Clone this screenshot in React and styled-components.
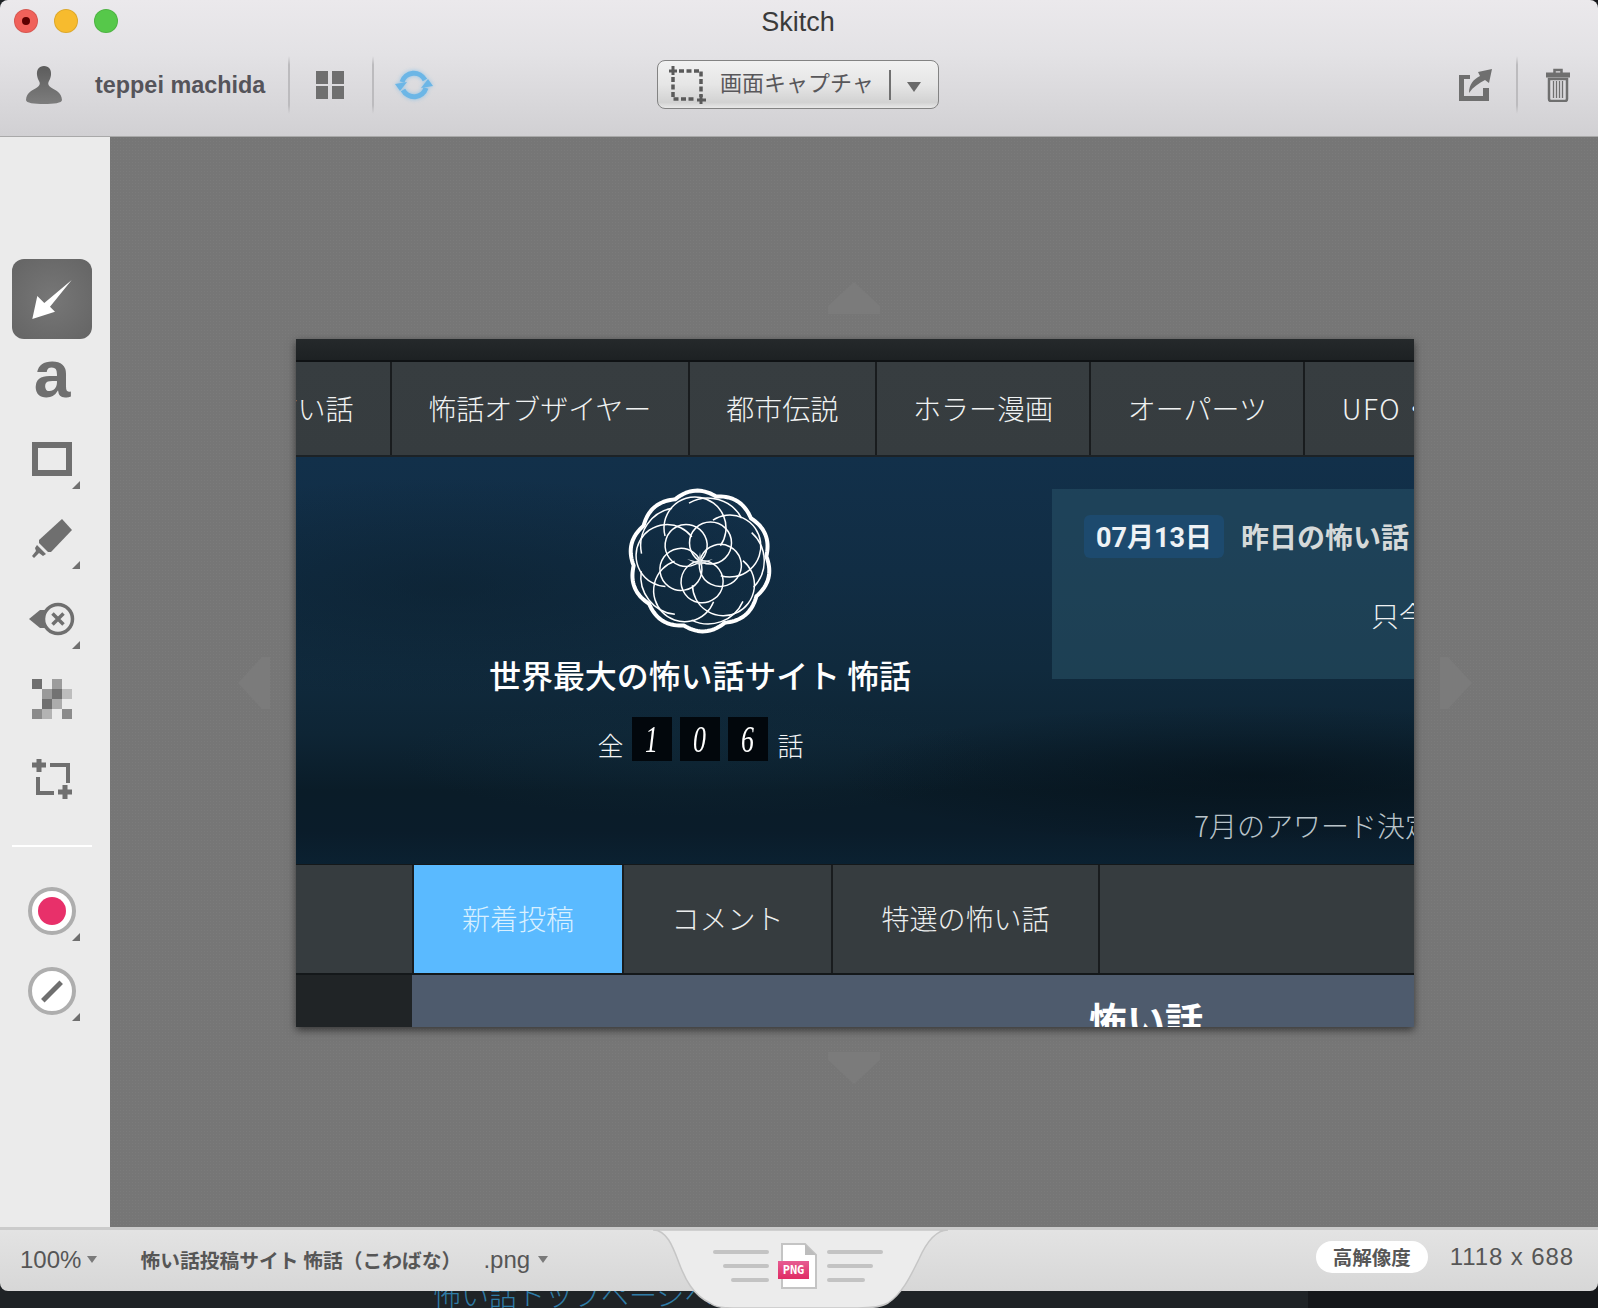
import React from "react";
import styled, { createGlobalStyle } from "styled-components";

const sans = `"Liberation Sans", "Noto Sans CJK JP", sans-serif`;
const jp = `"Noto Sans CJK JP", "Liberation Sans", sans-serif`;
const grey = "#6f6f6f";

const GlobalStyle = createGlobalStyle`
  html, body {
    margin: 0;
    padding: 0;
    background: #1f2326;
  }
  * {
    box-sizing: border-box;
  }
`;

const Page = styled.div`
  width: 1598px;
  height: 1308px;
  display: flex;
  flex-direction: column;
  overflow: hidden;
  background: linear-gradient(90deg, #1f2326 0, #1f2326 1308px, #15171a 1308px);
  font-family: ${sans};
`;

const Window = styled.div`
  position: relative;
  z-index: 1;
  height: 1291px;
  flex-shrink: 0;
  display: flex;
  flex-direction: column;
`;

const Backdrop = styled.div`
  height: 17px;
  padding-left: 433px;
  overflow: hidden;
`;

const BackdropText = styled.div`
  margin-top: -14px;
  font: 300 28px/34px ${jp};
  color: #2f7ca6;
`;

/* top of the window */
const Toolbar = styled.header`
  height: 137px;
  flex-shrink: 0;
  display: grid;
  grid-template-columns: 657px 282px 1fr;
  grid-template-rows: 43px 1fr;
  border-radius: 8px 8px 0 0;
  border-bottom: 1px solid #a9a9a9;
  background: linear-gradient(#ebe9ec, #e3e2e5 40%, #d1d0d3);
`;

const Lights = styled.div`
  grid-column: 1;
  display: flex;
  gap: 16px;
  padding: 9px 0 0 14px;
`;

const Light = styled.span`
  width: 24px;
  height: 24px;
  border-radius: 50%;
  display: flex;
  align-items: center;
  justify-content: center;
  background: ${(p) => p.color};
  border: 1px solid rgba(0, 0, 0, 0.1);
`;

const LightDot = styled.span`
  width: 8px;
  height: 8px;
  border-radius: 50%;
  background: #5c0000;
`;

const Title = styled.div`
  grid-column: 2;
  padding-top: 6px;
  text-align: center;
  font-size: 27px;
  line-height: 33px;
  color: #3a3a3a;
`;

const ToolsLeft = styled.div`
  grid-column: 1;
  grid-row: 2;
  display: flex;
  align-items: center;
  height: 84px;
`;

const ToolsRight = styled.div`
  grid-column: 3;
  grid-row: 2;
  display: flex;
  align-items: center;
  justify-content: flex-end;
  height: 84px;
  padding-right: 27px;
`;

const Avatar = styled.svg`
  width: 38px;
  height: 40px;
  margin: 0 32px 0 25px;
  flex-shrink: 0;
`;

const UserName = styled.span`
  width: 193px;
  font-size: 23.4px;
  font-weight: 700;
  color: #55545a;
`;

const Divider = styled.span`
  width: 2px;
  height: 58px;
  background: linear-gradient(transparent, #bcbbbe 15%, #bcbbbe 85%, transparent);
`;

const GridIcon = styled.div`
  display: grid;
  grid-template-columns: 12px 12px;
  grid-auto-rows: 13px;
  gap: 2px 4px;
  margin: 0 28px 0 26px;
  & > span {
    background: ${grey};
  }
`;

const SyncIcon = styled.svg`
  width: 40px;
  height: 36px;
  margin-left: 20px;
  filter: drop-shadow(0 0 2px rgba(110, 185, 235, 0.7));
`;

const CaptureWrap = styled.div`
  grid-column: 2;
  grid-row: 2;
  padding-top: 17px;
`;

const CaptureButton = styled.div`
  width: 282px;
  height: 49px;
  display: flex;
  align-items: center;
  padding-left: 11px;
  border: 1px solid #838383;
  border-radius: 8px;
  background: linear-gradient(#f1f1f1, #e6e6e6 50%, #d2d2d2 88%, #e8e8e8);
`;

const CaptureLabel = styled.span`
  margin: 0 0 7px 14px;
  font: 400 22px/1 ${jp};
  color: #58575a;
  white-space: nowrap;
`;

const CaptureSep = styled.span`
  width: 2px;
  height: 30px;
  margin-left: 15px;
  background: #707070;
`;

const Caret = styled.span`
  width: 0;
  height: 0;
  margin-left: ${(p) => p.gap || 0}px;
  margin-top: ${(p) => p.drop || 0}px;
  border-left: ${(p) => p.size}px solid transparent;
  border-right: ${(p) => p.size}px solid transparent;
  border-top: ${(p) => p.size * 1.5}px solid ${(p) => p.color || "#6a6a6a"};
`;

const TrashIcon = styled.svg`
  width: 26px;
  height: 34px;
  margin-left: 27px;
`;

const ShareIcon = styled.svg`
  width: 36px;
  height: 34px;
  margin-right: 22px;
`;

/* middle of the window */
const Body = styled.div`
  flex: 1;
  display: flex;
  min-height: 0;
`;

const Sidebar = styled.aside`
  width: 110px;
  flex-shrink: 0;
  display: flex;
  flex-direction: column;
  align-items: flex-start;
  padding: 122px 0 0 12px;
  background: #ebebeb;
`;

const Tool = styled.div`
  position: relative;
  width: 80px;
  height: 80px;
  flex-shrink: 0;
  display: flex;
  align-items: center;
  justify-content: center;
  border-radius: 12px;
  background: ${(p) =>
    p.active ? "radial-gradient(circle, #777 0, #646464 100%)" : "transparent"};
`;

const ToolLetter = styled.span`
  font: 700 66px/1 ${sans};
  color: ${grey};
  margin-top: -10px;
`;

const Corner = styled.span`
  position: absolute;
  right: 12px;
  bottom: 10px;
  width: 0;
  height: 0;
  border-left: 8px solid transparent;
  border-bottom: 8px solid ${grey};
`;

const RectIcon = styled.span`
  width: 40px;
  height: 34px;
  border: 6px solid ${grey};
`;

const PixelGrid = styled.div`
  display: grid;
  grid-template-columns: repeat(4, 10px);
  grid-auto-rows: 10px;
`;

const Pixel = styled.span`
  background: ${(p) => p.shade};
`;

const SideRule = styled.div`
  width: 80px;
  height: 2px;
  margin: 26px 0 24px;
  background: #fff;
`;

const Swatch = styled.span`
  width: 48px;
  height: 48px;
  display: flex;
  align-items: center;
  justify-content: center;
  border-radius: 50%;
  border: 4px solid #aeaeae;
  background: #fff;
`;

const SwatchDot = styled.span`
  width: 28px;
  height: 28px;
  border-radius: 50%;
  background: #e8306a;
`;

const SwatchLine = styled.span`
  width: 26px;
  height: 5px;
  background: ${grey};
  transform: rotate(-45deg);
`;

const Canvas = styled.main`
  flex: 1;
  display: flex;
  align-items: center;
  justify-content: center;
  padding: 2px 0 0 2px;
  background-color: #767676;
  background-image: radial-gradient(rgba(255, 255, 255, 0.035) 1px, transparent 1px);
  background-size: 3px 3px;
`;

const Shot = styled.div`
  position: relative;
  width: 1118px;
  height: 688px;
  display: flex;
  flex-direction: column;
  background: #202426;
  box-shadow: 0 3px 8px rgba(0, 0, 0, 0.55);
`;

const Nudge = styled.svg`
  position: absolute;
  width: 56px;
  height: 36px;
  left: ${(p) => p.$left}px;
  top: ${(p) => p.$top}px;
  transform: rotate(${(p) => p.$turn}deg);
  transform-origin: center;
`;

const ShotClip = styled.div`
  flex: 1;
  display: flex;
  flex-direction: column;
  overflow: hidden;
`;

const TopStrip = styled.div`
  height: 23px;
  flex-shrink: 0;
  background: linear-gradient(#25292b, #1d2123);
  border-bottom: 2px solid #0f1214;
`;

const NavRow = styled.nav`
  height: 95px;
  flex-shrink: 0;
  display: flex;
  margin-left: -63px;
  background: linear-gradient(#373d40, #363c3f);
  border-bottom: 2px solid #1c2226;
`;

const NavItem = styled.div`
  flex-shrink: 0;
  display: flex;
  align-items: center;
  padding: 0 36.4px 2px;
  border-right: 2px solid #191c1e;
  font: 300 28px/1 ${jp};
  color: #f0f2f2;
  white-space: nowrap;
`;

const NavLatin = styled.span`
  letter-spacing: 1.6px;
`;

const Hero = styled.section`
  height: 407px;
  flex-shrink: 0;
  display: flex;
  overflow: hidden;
  background:
    radial-gradient(ellipse 420px 70px at 960px 318px, rgba(3, 12, 18, 0.5), transparent),
    radial-gradient(ellipse 380px 110px at 150px 130px, rgba(10, 28, 40, 0.45), transparent),
    radial-gradient(ellipse 300px 60px at 400px 300px, rgba(20, 50, 68, 0.25), transparent),
    linear-gradient(#12304a 0, #112d44 28%, #102a3d 52%, #0e2535 68%, #0a1c28 82%, #0a1c2a 92%, #0b2131 100%);
`;

const Brand = styled.div`
  width: 756px;
  flex-shrink: 0;
  display: flex;
  flex-direction: column;
  align-items: center;
  padding: 31px 0 0 52px;
`;

const Logo = styled.svg`
  width: 146px;
  height: 146px;
  display: block;
`;

const BrandTitle = styled.h1`
  margin: 17px 0 0;
  font: 500 32px/46px ${jp};
  letter-spacing: -0.1px;
  color: #fff;
  white-space: nowrap;
`;

const Counter = styled.div`
  display: flex;
  align-items: flex-end;
  gap: 8px;
  margin: 20px 0 0 1px;
  font: 300 26px/38px ${jp};
  color: #f2f4f5;
`;

const Digit = styled.span`
  width: 40px;
  height: 44px;
  display: flex;
  align-items: center;
  justify-content: center;
  background: #02070c;
`;

const DigitFace = styled.span`
  display: block;
  font: italic 400 38px/1 "Liberation Serif", serif;
  color: #fff;
  transform: scaleX(0.68);
`;

const CounterUnit = styled.span`
  margin: 0 0 -3px ${(p) => p.left || 0}px;
`;

const News = styled.div`
  width: 640px;
  flex-shrink: 0;
  padding-top: 32px;
`;

const NewsCard = styled.div`
  height: 190px;
  padding: 26px 0 0 32px;
  background: rgba(46, 92, 110, 0.45);
`;

const NewsHead = styled.div`
  display: flex;
  align-items: center;
  gap: 17px;
`;

const DateBadge = styled.span`
  width: 140px;
  height: 43px;
  display: flex;
  align-items: center;
  justify-content: center;
  padding-top: 4px;
  border-radius: 6px;
  background: #1d4a6e;
  font: 700 27px/1 "Roboto", ${jp};
  color: #eef2f5;
`;

const NewsHeading = styled.span`
  margin-bottom: 2px;
  font: 700 28px/1 ${jp};
  color: #d5d9d9;
  white-space: nowrap;
`;

const NewsBody = styled.div`
  margin-top: 43px;
  padding-left: 287px;
  font: 300 28px/1 ${jp};
  color: #eef1f2;
  white-space: nowrap;
`;

const Award = styled.div`
  margin-top: 132px;
  padding-left: 142px;
  font: 300 28px/1 ${jp};
  color: #b9c4ca;
  white-space: nowrap;
`;

const TabRow = styled.nav`
  height: 111px;
  flex-shrink: 0;
  display: flex;
  padding-left: 116px;
  background: #363c3f;
  border-top: 1px solid #14181a;
  border-bottom: 2px solid #14181a;
`;

const TabItem = styled.div`
  width: ${(p) => p.width}px;
  flex-shrink: 0;
  display: flex;
  align-items: center;
  justify-content: center;
  padding-bottom: 2px;
  border-left: 2px solid #191c1e;
  background: ${(p) => (p.active ? "#5abaff" : "transparent")};
  font: 300 28px/1 ${jp};
  color: ${(p) => (p.active ? "#d8f0ff" : "#eceeee")};
  white-space: nowrap;
`;

const TabEnd = styled.span`
  border-left: 2px solid #191c1e;
`;

const LowerRow = styled.div`
  flex: 1;
  display: flex;
  min-height: 0;
`;

const LowerGutter = styled.div`
  width: 116px;
  flex-shrink: 0;
  background: #202426;
`;

const LowerPanel = styled.div`
  flex: 1;
  padding: 21px 0 0 677px;
  background: #4e5b6d;
  font: 700 38px/1.2 ${jp};
  color: #fff;
  white-space: nowrap;
`;

/* bottom of the window */
const StatusBar = styled.footer`
  position: relative;
  height: 64px;
  flex-shrink: 0;
  display: flex;
  align-items: center;
  padding-bottom: 2px;
  border-top: 3px solid #cbcbcb;
  border-radius: 0 0 8px 8px;
  background: linear-gradient(#e3e3e3, #d7d7d7);
  color: #565656;
`;

const Zoom = styled.span`
  margin-left: 20px;
  font-size: 24px;
`;

const FileName = styled.span`
  margin-left: 43px;
  font: 700 19.8px/1 ${jp};
  white-space: nowrap;
`;

const Extension = styled.span`
  margin-left: 22px;
  font-size: 24px;
`;

const StatusRight = styled.div`
  margin: -5px 0 0 auto;
  display: flex;
  align-items: center;
  padding-right: 24px;
`;

const Pill = styled.span`
  width: 112px;
  height: 32px;
  display: flex;
  align-items: center;
  justify-content: center;
  border-radius: 16px;
  background: #fff;
  font: 700 19.5px/1 ${jp};
`;

const Dimensions = styled.span`
  margin-left: 22px;
  font-size: 24px;
  letter-spacing: 0.9px;
`;

const Notch = styled.div`
  position: absolute;
  left: 653px;
  top: -3px;
  width: 280px;
  height: 84px;
  display: flex;
  justify-content: center;
  gap: 9px;
  padding: 16px 0 0 10px;
`;

const NotchShape = styled.svg`
  position: absolute;
  left: 0;
  top: 0;
  width: 296px;
  height: 84px;
`;

const Lines = styled.div`
  position: relative;
  display: flex;
  flex-direction: column;
  gap: 10px;
  padding-top: 7px;
  align-items: ${(p) => (p.right ? "flex-start" : "flex-end")};
  width: 56px;
`;

const Line = styled.span`
  width: ${(p) => p.width}px;
  height: 4px;
  border-radius: 2px;
  background: #c3c3c3;
`;

const FileIcon = styled.div`
  position: relative;
  width: 40px;
  height: 46px;
`;

const FilePage = styled.svg`
  position: absolute;
  left: 3px;
  top: 0;
  width: 36px;
  height: 46px;
`;

const FileBadge = styled.span`
  position: absolute;
  left: 0;
  top: 18px;
  width: 31px;
  height: 18px;
  display: flex;
  align-items: center;
  justify-content: center;
  background: linear-gradient(#e65c92, #e02c64);
  font: 700 12px/1 "DejaVu Sans Mono", monospace;
  color: #fff;
`;

const Arrowhead = ({ left, top, turn }) => (
  <Nudge viewBox="0 0 56 36" $left={left} $top={top} $turn={turn}>
    <path d="M28 2 L54 26 V34 H2 V26 Z" fill="#7b7b7b" />
  </Nudge>
);

// rosette logo, five petals turned around the centre
const petals = [0, 72, 144, 216, 288];
const mid = 73;

const arcAround = (cx, cy, r, from, to) => {
  const at = (deg) => {
    const a = ((deg - 90) * Math.PI) / 180;
    return `${(cx + r * Math.cos(a)).toFixed(2)} ${(cy + r * Math.sin(a)).toFixed(2)}`;
  };
  const large = to - from > 180 ? 1 : 0;
  return `M${at(from)} A${r} ${r} 0 ${large} 1 ${at(to)}`;
};

const scallop = () => {
  const out = [];
  for (let deg = 0; deg < 360; deg += 2) {
    const a = (deg * Math.PI) / 180;
    const r = 66.5 + 4 * Math.abs(Math.sin(5 * a + 0.35));
    out.push(`${(mid + r * Math.cos(a)).toFixed(2)} ${(mid + r * Math.sin(a)).toFixed(2)}`);
  }
  return `M${out.join(" L")} Z`;
};

const RosetteLogo = () => (
  <Logo viewBox="0 0 146 146" fill="none" stroke="#fff">
    <path d={scallop()} strokeWidth="4" strokeLinejoin="round" />
    {petals.map((turn) => (
      <g key={turn} transform={`rotate(${turn} ${mid} ${mid})`} strokeWidth="1.5">
        <circle cx={mid + 10.5} cy={mid - 18} r="21" />
        <path d={arcAround(mid - 5, mid - 33, 31, -105, 125)} />
        <path d={arcAround(mid + 8, mid - 25, 38, -30, 62)} />
      </g>
    ))}
    <path d="M73 64 L74.500 74 L86 71 L75 76.500 H71 L60 71 L71.500 74 Z" fill="#dfe4e6" stroke="none" />
  </Logo>
);

const pixels = [
  "#6f6f6f", "transparent", "#9c9c9c", "transparent",
  "transparent", "#9a9a9a", "#727272", "#bdbdbd",
  "transparent", "#707070", "#acacac", "transparent",
  "#8b8b8b", "#b3b3b3", "transparent", "#8b8b8b",
];

const navItems = ["怖い話", "怖話オブザイヤー", "都市伝説", "ホラー漫画", "オーパーツ"];
const digits = ["1", "0", "6"];

const App = () => (
  <>
    <GlobalStyle />
    <Page>
      <Window>
        <Toolbar>
          <Lights>
            <Light color="#f0615a">
              <LightDot />
            </Light>
            <Light color="#f7bb2e" />
            <Light color="#56c84a" />
          </Lights>
          <Title>Skitch</Title>
          <ToolsLeft>
            <Avatar viewBox="0 0 38 40">
              <defs>
                <linearGradient id="avatarFill" x1="0" y1="0" x2="0" y2="1">
                  <stop offset="0" stopColor="#5c5c5c" />
                  <stop offset="1" stopColor="#7d7d7d" />
                </linearGradient>
              </defs>
              <path
                d="M19 1c-5 0-7.500 3.500-7 9 .3 3 1.500 5 2.500 7 .8 2-.2 4-2.500 5.500C8 25 1.500 27 1 35c0 3 8 4 18 4s18-1 18-4c-.5-8-7-10-11-12.500-2.300-1.500-3.300-3.500-2.500-5.500 1-2 2.200-4 2.500-7 .5-5.500-2-9-7-9z"
                fill="url(#avatarFill)"
              />
            </Avatar>
            <UserName>teppei machida</UserName>
            <Divider />
            <GridIcon>
              <span />
              <span />
              <span />
              <span />
            </GridIcon>
            <Divider />
            <SyncIcon viewBox="0 0 40 36" fill="none" stroke="#6cb6e6" strokeWidth="5">
              <path d="M8 15 A12.500 12.500 0 0 1 31 13" />
              <path d="M32 21 A12.500 12.500 0 0 1 9 23" />
              <path d="M1 17 L13 15 L6 24 Z" fill="#6cb6e6" stroke="none" />
              <path d="M39 19 L27 21 L34 12 Z" fill="#6cb6e6" stroke="none" />
            </SyncIcon>
          </ToolsLeft>
          <CaptureWrap>
            <CaptureButton>
              <svg width="37" height="39" viewBox="0 0 37 39" fill="none" stroke="#5a5a5a">
                <path d="M10 6 H32 V32" strokeWidth="3.500" strokeDasharray="5 2.500" />
                <path d="M4 12 V34 H26" strokeWidth="3.500" strokeDasharray="5 2.500" />
                <path d="M4 1 V10 M0 6 H8 M32 30 V39 M28 35 H37" strokeWidth="3" />
              </svg>
              <CaptureLabel>画面キャプチャ</CaptureLabel>
              <CaptureSep />
              <Caret size={7} gap={16} drop={4} />
            </CaptureButton>
          </CaptureWrap>
          <ToolsRight>
            <ShareIcon viewBox="0 0 36 34">
              <path d="M1 7 H12 V11 H6 V28 H25 V20 H31 V33 H1 Z" fill={grey} />
              <path d="M11 25 C11 16 16 11 22 8 L20 4 L34 1 L31 15 L27 12 C21 15 15 19 11 25 Z" fill={grey} />
            </ShareIcon>
            <Divider />
            <TrashIcon viewBox="0 0 26 34" fill="none" stroke={grey}>
              <path d="M9.500 5 V2 H16.500 V5" strokeWidth="2.500" />
              <path d="M1 7 H25" strokeWidth="5" />
              <path d="M4 11 H22 V31 Q22 33 20 33 H6 Q4 33 4 31 Z" strokeWidth="2.500" />
              <path d="M8.500 13 V30 M11.500 13 V30 M14.500 13 V30 M17.500 13 V30" strokeWidth="1.300" />
            </TrashIcon>
          </ToolsRight>
        </Toolbar>

        <Body>
          <Sidebar>
            <Tool active>
              <svg width="44" height="44" viewBox="0 0 44 44">
                <path d="M2.300 42 L7.300 19 L14.300 26 L41.700 3 L20 29.700 L25 34.700 Z" fill="#fff" />
              </svg>
            </Tool>
            <Tool>
              <ToolLetter>a</ToolLetter>
            </Tool>
            <Tool>
              <RectIcon />
              <Corner />
            </Tool>
            <Tool>
              <svg width="40" height="40" viewBox="0 0 40 40" fill={grey}>
                <path d="M30 0 L40 11 L19 33 L16 33 L7 24 L7 21 Z" />
                <path d="M5 26 L14 35 L11 37 L7 34 L2 39 L0 37 L4 32 L3 29 Z" />
              </svg>
              <Corner />
            </Tool>
            <Tool>
              <svg width="48" height="34" viewBox="0 0 48 34">
                <path d="M1 17 L12 8 H26 V26 H12 Z" fill={grey} />
                <circle cx="30" cy="17" r="14.500" fill="#ebebeb" stroke={grey} strokeWidth="3.500" />
                <path d="M24.500 11.500 L35.500 22.500 M35.500 11.500 L24.500 22.500" stroke={grey} strokeWidth="3.500" />
              </svg>
              <Corner />
            </Tool>
            <Tool>
              <PixelGrid>
                {pixels.map((shade, i) => (
                  <Pixel key={i} shade={shade} />
                ))}
              </PixelGrid>
            </Tool>
            <Tool>
              <svg width="40" height="40" viewBox="0 0 40 40" fill="none" stroke={grey} strokeWidth="4">
                <path d="M18 6 H36 V24" />
                <path d="M6 18 V34 H22" />
                <path d="M0 6 H14 M7 0 V13 M26 33 H40 M33 26 V40" strokeWidth="5" />
              </svg>
            </Tool>
            <SideRule />
            <Tool>
              <Swatch>
                <SwatchDot />
              </Swatch>
              <Corner />
            </Tool>
            <Tool>
              <Swatch>
                <SwatchLine />
              </Swatch>
              <Corner />
            </Tool>
          </Sidebar>

          <Canvas>
            <Shot>
              <Arrowhead left={530} top={-59} turn={0} />
              <Arrowhead left={530} top={711} turn={180} />
              <Arrowhead left={-70} top={326} turn={-90} />
              <Arrowhead left={1132} top={326} turn={90} />
              <ShotClip>
                <TopStrip />
                <NavRow>
                  {navItems.map((label) => (
                    <NavItem key={label}>{label}</NavItem>
                  ))}
                  <NavItem>
                    <NavLatin>UFO</NavLatin>・宇宙人
                  </NavItem>
                </NavRow>
                <Hero>
                  <Brand>
                    <RosetteLogo />
                    <BrandTitle>世界最大の怖い話サイト 怖話</BrandTitle>
                    <Counter>
                      <CounterUnit>全</CounterUnit>
                      {digits.map((digit) => (
                        <Digit key={digit}>
                          <DigitFace>{digit}</DigitFace>
                        </Digit>
                      ))}
                      <CounterUnit left={2}>話</CounterUnit>
                    </Counter>
                  </Brand>
                  <News>
                    <NewsCard>
                      <NewsHead>
                        <DateBadge>07月13日</DateBadge>
                        <NewsHeading>昨日の怖い話</NewsHeading>
                      </NewsHead>
                      <NewsBody>只今集計中です</NewsBody>
                    </NewsCard>
                    <Award>7月のアワード決定</Award>
                  </News>
                </Hero>
                <TabRow>
                  <TabItem active width={210}>新着投稿</TabItem>
                  <TabItem width={209}>コメント</TabItem>
                  <TabItem width={267}>特選の怖い話</TabItem>
                  <TabEnd />
                </TabRow>
                <LowerRow>
                  <LowerGutter />
                  <LowerPanel>怖い話</LowerPanel>
                </LowerRow>
              </ShotClip>
            </Shot>
          </Canvas>
        </Body>

        <StatusBar>
          <Zoom>100%</Zoom>
          <Caret size={5} gap={6} color="#7a7a7a" />
          <FileName>怖い話投稿サイト 怖話（こわばな）</FileName>
          <Extension>.png</Extension>
          <Caret size={5} gap={8} color="#7a7a7a" />
          <Notch>
            <NotchShape viewBox="0 0 296 84">
              <path
                d="M0 3 H295 C283 3 274 14 266 32 C258 48 250 66 235 76 C228 80 220 81 205 81 H80 C70 81 62 80 57 76 C40 68 32 52 26 36 C20 20 14 3 0 3 Z"
                fill="#ececec"
                stroke="#c6c6c6"
                strokeWidth="1.500"
              />
            </NotchShape>
            <Lines>
              <Line width={56} />
              <Line width={46} />
              <Line width={38} />
            </Lines>
            <FileIcon>
              <FilePage viewBox="0 0 36 46">
                <path d="M1 1 H24 L35 12 V45 H1 Z" fill="#fff" stroke="#c4c4c4" strokeWidth="2" />
                <path d="M24 1 L35 12 H24 Z" fill="#bdbdbd" />
              </FilePage>
              <FileBadge>PNG</FileBadge>
            </FileIcon>
            <Lines right>
              <Line width={56} />
              <Line width={46} />
              <Line width={38} />
            </Lines>
          </Notch>
          <StatusRight>
            <Pill>高解像度</Pill>
            <Dimensions>1118 x 688</Dimensions>
          </StatusRight>
        </StatusBar>
      </Window>
      <Backdrop>
        <BackdropText>怖い話トップページへ</BackdropText>
      </Backdrop>
    </Page>
  </>
);

export default App;
